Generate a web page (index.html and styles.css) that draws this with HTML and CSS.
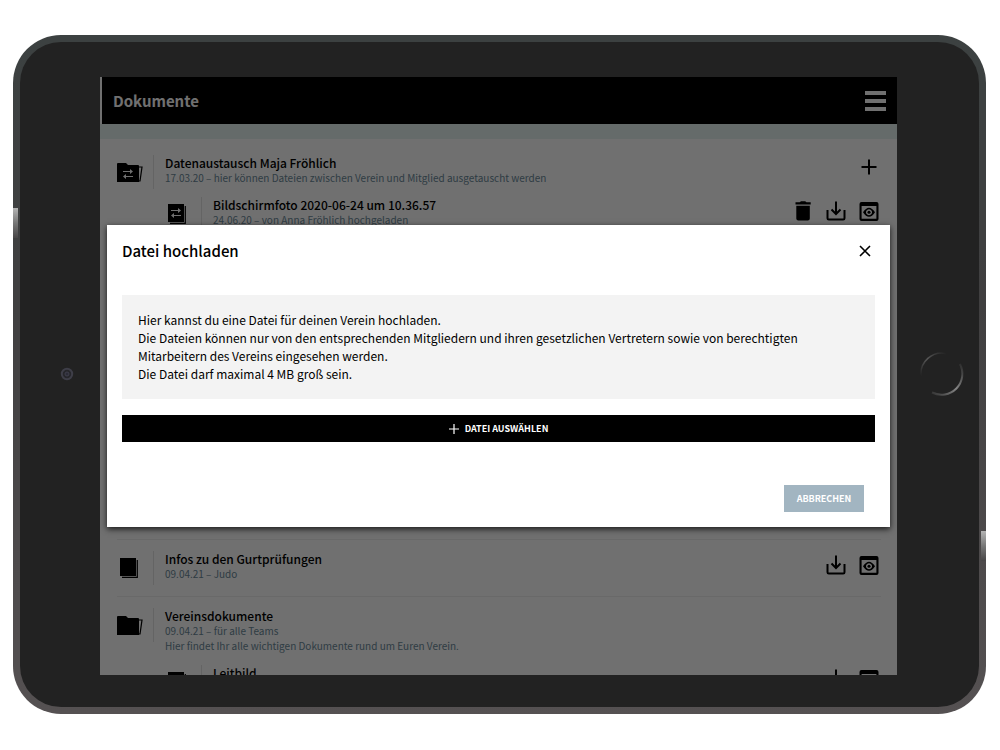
FILE: index.html
```
<!DOCTYPE html>
<html lang="de">
<head>
    <meta charset="UTF-8">
    <meta name="viewport" content="width=device-width, initial-scale=1.0">
    <title>Dokumente</title>
    <link rel="stylesheet" href="styles.css">
</head>
<body>

    <!-- shared icons -->
    <svg class="sprite" aria-hidden="true">
        <symbol id="folder" viewBox="0 0 26 20">
            <path d="M0 1q0-1 1-1h8l2 2h10q1 0 1 1v16H0z"/>
            <path d="M22 4h3l-2 14h-2" fill="none" stroke="#000" stroke-width="1.2"/>
        </symbol>
        <symbol id="file" viewBox="0 0 18 20">
            <path d="M0 0h16v18H0z"/>
            <path d="M17.3 2v17.3H2" fill="none" stroke="#000" stroke-width="1.2"/>
        </symbol>
        <symbol id="swap" viewBox="0 0 10 10">
            <path d="M0 2.5h8M10 7.5H2" fill="none" stroke="#fff" stroke-width="1.1"/>
            <path d="M7 0l3 2.5L7 5zM3 5L0 7.5 3 10z" fill="#fff"/>
        </symbol>
        <symbol id="plus" viewBox="0 0 20 20">
            <path d="M10 2.5v15M2.5 10h15" fill="none" stroke="#000" stroke-width="2"/>
        </symbol>
        <symbol id="trash" viewBox="0 0 20 20">
            <path d="M2.5 1.3h4.2L8 .2h4.2l1.3 1.1h4.2v2.1H2.5zM3.3 4.7h13.5v12.8q0 2-2 2H5.3q-2 0-2-2z"/>
        </symbol>
        <symbol id="download" viewBox="0 0 20 20">
            <path d="M1.5 9v8.2q0 1.3 1.3 1.3h14.4q1.3 0 1.3-1.3V9M10 .5v12M5.5 8.5l4.5 4.5 4.5-4.5" fill="none" stroke="#000" stroke-width="2"/>
        </symbol>
        <symbol id="preview" viewBox="0 0 20 20">
            <path fill-rule="evenodd" d="M2.5 1h15Q19.5 1 19.5 3v15q0 2-2 2h-15q-2 0-2-2V3q0-2 2-2zM2.6 5v12.8h14.8V5z"/>
            <path fill-rule="evenodd" d="M4 11.3q6-9 12 0-6 9-12 0zM10 8.3a3 3 0 1 0 .01 0z"/>
            <circle cx="10" cy="11.3" r="1.5"/>
        </symbol>
    </svg>

    <div class="tablet">
        <div class="bezel">
            <svg class="camera" viewBox="0 0 14 14" aria-hidden="true">
                <circle cx="7" cy="7" r="5.2" fill="#26262b" stroke="#3e3e48" stroke-width="2"/>
                <circle cx="7" cy="7" r="2" fill="#2c2c38" stroke="#3f3f4c"/>
            </svg>
        </div>

        <div class="screen">
            <header class="topbar">
                <h1>Dokumente</h1>
                <button class="menu" aria-label="Menü"><span></span><span></span><span></span></button>
            </header>
            <div class="strip"></div>

            <main class="list">
                <section class="group first">
                    <div class="row">
                        <div class="icon">
                            <svg width="26" height="20"><use href="#folder"/><use href="#swap" x="6" y="6" width="10" height="10"/></svg>
                        </div>
                        <div class="info">
                            <h2>Datenaustausch Maja Fröhlich</h2>
                            <p>17.03.20 – hier können Dateien zwischen Verein und Mitglied ausgetauscht werden</p>
                        </div>
                        <div class="actions add">
                            <button aria-label="Hinzufügen"><svg><use href="#plus"/></svg></button>
                        </div>
                    </div>
                    <div class="row child">
                        <div class="icon file">
                            <svg width="18" height="20"><use href="#file"/><use href="#swap" x="3" y="4" width="10" height="10"/></svg>
                        </div>
                        <div class="info">
                            <h2>Bildschirmfoto 2020-06-24 um 10.36.57</h2>
                            <p>24.06.20 – von Anna Fröhlich hochgeladen</p>
                        </div>
                        <div class="actions">
                            <button aria-label="Löschen"><svg><use href="#trash"/></svg></button>
                            <button aria-label="Herunterladen"><svg><use href="#download"/></svg></button>
                            <button aria-label="Vorschau"><svg><use href="#preview"/></svg></button>
                        </div>
                    </div>
                </section>

                <section class="group">
                    <div class="row">
                        <div class="icon file">
                            <svg width="18" height="20"><use href="#file"/></svg>
                        </div>
                        <div class="info">
                            <h2>Infos zu den Gurtprüfungen</h2>
                            <p>09.04.21 – Judo</p>
                        </div>
                        <div class="actions">
                            <button aria-label="Herunterladen"><svg><use href="#download"/></svg></button>
                            <button aria-label="Vorschau"><svg><use href="#preview"/></svg></button>
                        </div>
                    </div>
                </section>

                <section class="group">
                    <div class="row">
                        <div class="icon">
                            <svg width="26" height="20"><use href="#folder"/></svg>
                        </div>
                        <div class="info">
                            <h2>Vereinsdokumente</h2>
                            <p>09.04.21 – für alle Teams</p>
                            <p>Hier findet Ihr alle wichtigen Dokumente rund um Euren Verein.</p>
                        </div>
                    </div>
                    <div class="row child">
                        <div class="icon file">
                            <svg width="18" height="20"><use href="#file"/></svg>
                        </div>
                        <div class="info">
                            <h2>Leitbild</h2>
                        </div>
                        <div class="actions">
                            <button aria-label="Herunterladen"><svg><use href="#download"/></svg></button>
                            <button aria-label="Vorschau"><svg><use href="#preview"/></svg></button>
                        </div>
                    </div>
                </section>
            </main>

            <div class="overlay">
                <div class="modal" role="dialog" aria-labelledby="modal-title">
                    <div class="modal-head">
                        <h2 id="modal-title">Datei hochladen</h2>
                        <button class="close" aria-label="Schließen">
                            <svg viewBox="0 0 12 12"><path d="M1 1l10 10M11 1L1 11" fill="none" stroke="#000" stroke-width="1.6"/></svg>
                        </button>
                    </div>
                    <p class="hint">
                        Hier kannst du eine Datei für deinen Verein hochladen.<br>
                        Die Dateien können nur von den entsprechenden Mitgliedern und ihren gesetzlichen Vertretern sowie von berechtigten Mitarbeitern des Vereins eingesehen werden.<br>
                        Die Datei darf maximal 4 MB groß sein.
                    </p>
                    <button class="btn choose">
                        <svg viewBox="0 0 10 10"><path d="M5 0v10M0 5h10" stroke="#fff" stroke-width="1.2"/></svg>
                        DATEI AUSWÄHLEN
                    </button>
                    <div class="modal-foot">
                        <button class="btn cancel">ABBRECHEN</button>
                    </div>
                </div>
            </div>
        </div>

        <div class="bezel">
            <svg class="home" viewBox="0 0 46 46" aria-hidden="true">
                <defs>
                    <linearGradient id="dim" x1="0" y1="1" x2="1" y2="0">
                        <stop offset="0" stop-color="#222"/>
                        <stop offset=".5" stop-color="#575757"/>
                        <stop offset="1" stop-color="#222"/>
                    </linearGradient>
                    <linearGradient id="lit" x1="0" y1="1" x2="1" y2="0">
                        <stop offset="0" stop-color="#333"/>
                        <stop offset=".5" stop-color="#858585"/>
                        <stop offset="1" stop-color="#2a2a2a"/>
                    </linearGradient>
                </defs>
                <path d="M2 25A21 21 0 0 1 27 2.4" fill="none" stroke="url(#dim)" stroke-width="1.5"/>
                <path d="M41 13A21 21 0 0 1 13 41.5" fill="none" stroke="url(#lit)" stroke-width="2"/>
            </svg>
        </div>
    </div>

</body>
</html>
```
FILE: styles.css
```
*{
    box-sizing: border-box;
    margin: 0;
    padding: 0;
}
body{
    height: 100vh;
    padding: 35px 14px 36px 13px;
    background-color: #fff;
    color: #000;
    font-family: "Noto Sans CJK SC", "Noto Sans", sans-serif;
}
button{
    border: none;
    background: none;
    font-family: inherit;
    cursor: pointer;
}
svg{
    display: block;
}
.sprite{
    position: absolute;
    width: 0;
    height: 0;
}

/* tablet frame */
.tablet{
    position: relative;
    display: flex;
    height: 100%;
    padding: 35px 0 32px;
    border: 7px solid transparent;
    border-radius: 48px;
    background: linear-gradient(#222, #222) padding-box,
                linear-gradient(#3c4141, #403f40 40%, #555152) border-box;
}
.tablet::before,.tablet::after{
    content: '';
    position: absolute;
    width: 5px;
    height: 30px;
    background: linear-gradient(#b4b4b4, #777 50%, #484647);
}
.tablet::before{
    left: -7px;
    top: 166px;
}
.tablet::after{
    right: -7px;
    top: 489px;
}
.bezel{
    flex: 0 0 80px;
    display: flex;
    align-items: center;
    justify-content: center;
    padding-bottom: 4px;
}
.camera{
    width: 14px;
    height: 14px;
    margin-left: 14px;
}
.bezel:last-child{
    flex-basis: 82px;
}
.home{
    width: 46px;
    height: 46px;
    margin-left: 8px;
}

/* screen */
.screen{
    position: relative;
    flex: 1;
    overflow: hidden;
    background-color: #fff;
}
.topbar{
    display: flex;
    justify-content: space-between;
    align-items: center;
    height: 47px;
    margin-left: 2px;
    padding: 0 11px;
    background-color: #000;
    color: #fff;
}
.topbar h1{
    font-size: 15px;
    font-weight: bold;
    line-height: 20px;
}
.menu{
    display: flex;
    flex-direction: column;
    gap: 4px;
    width: 21px;
}
.menu span{
    height: 4px;
    background-color: #fff;
}
.strip{
    height: 15px;
    background-color: #e6f4f2;
}
.list{
    padding: 0 16px 0 17px;
}
.group{
    padding: 11px 0;
    border-top: 1px solid #eee;
}
.group.first{
    min-height: 400px;
    padding-top: 16px;
    border-top: none;
}
.row{
    display: flex;
    align-items: flex-start;
}
.row.child{
    margin: 8px 0 0 48px;
}
.icon{
    width: 36px;
    padding-top: 8px;
}
.icon.file{
    padding: 7px 0 0 3px;
}
.info{
    position: relative;
    flex: 1;
    min-height: 34px;
    padding-left: 12px;
}
.info::before{
    content: '';
    position: absolute;
    left: 0;
    top: 0;
    width: 1px;
    height: 34px;
    background-color: #e4e4e4;
}
.info h2{
    font-size: 12px;
    font-weight: 500;
    line-height: 15px;
}
.info p{
    color: #6c8a9a;
    font-size: 10px;
    line-height: 15px;
}
.info p + p{
    margin-bottom: 4px;
}
.actions{
    display: flex;
    gap: 13px;
    padding: 4px 2px 0 0;
}
.actions.add{
    padding-top: 2px;
}
.actions button,.actions svg{
    width: 20px;
    height: 20px;
}

/* upload dialog */
.overlay{
    position: absolute;
    inset: 0;
    display: flex;
    align-items: center;
    padding: 0 7px;
    background-color: rgba(0,0,0,.56);
}
.modal{
    flex: 1;
    padding: 16px 15px 15px;
    background-color: #fff;
    box-shadow: 0 2px 6px rgba(0,0,0,.8);
}
.modal-head{
    display: flex;
    justify-content: space-between;
    align-items: center;
    margin-bottom: 34px;
    padding-right: 4px;
}
.modal-head h2{
    font-size: 15px;
    font-weight: 500;
    line-height: 20px;
}
.close,.close svg{
    width: 12px;
    height: 12px;
}
.hint{
    margin-bottom: 16px;
    padding: 16px;
    background-color: #f3f3f3;
    font-size: 12px;
    line-height: 18px;
}
.btn{
    height: 27px;
    color: #fff;
    font-size: 9px;
    font-weight: bold;
}
.choose{
    display: flex;
    justify-content: center;
    align-items: center;
    gap: 6px;
    width: 100%;
    background-color: #000;
}
.choose svg{
    width: 10px;
    height: 10px;
}
.modal-foot{
    display: flex;
    justify-content: flex-end;
    margin-top: 43px;
    padding-right: 11px;
}
.cancel{
    width: 80px;
    background-color: #a2b5c1;
}
```
